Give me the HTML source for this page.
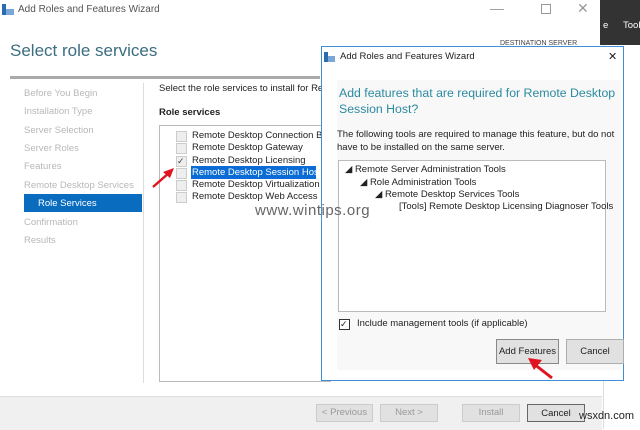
<!DOCTYPE html><html><head><style>
body{margin:0;width:640px;height:429px;overflow:hidden;background:#fff;font-family:"Liberation Sans",sans-serif;font-size:9.5px;color:#222;position:relative}
.a{position:absolute;white-space:nowrap}
.nav{color:#b8b8b8;left:24px;font-size:9.5px}
.cb{position:absolute;width:9px;height:9px;border:1px solid #ccc;background:#eee}
.btn{position:absolute;border:1px solid #adadad;background:#e1e1e1;text-align:center;font-size:9.5px;box-sizing:border-box}
</style></head><body>
<svg class="a" style="left:2px;top:4px" width="13" height="12"><rect x="0" y="0" width="4" height="11" fill="#2b6cb0"/><rect x="4" y="5" width="8" height="6" fill="#7aa7d6"/></svg>
<div class="a" style="left:18px;top:4px;color:#555;font-size:10px">Add Roles and Features Wizard</div>
<div class="a" style="left:490px;top:0;color:#999;font-size:14px">—</div>
<div class="a" style="left:541px;top:4px;width:8px;height:8px;border:1px solid #999"></div>
<div class="a" style="left:577px;top:0;color:#999;font-size:14px">✕</div>
<div class="a" style="left:600px;top:0;width:40px;height:45px;background:#333"></div>
<div class="a" style="left:603px;top:20px;color:#fff;font-size:9.5px">e</div>
<div class="a" style="left:623px;top:20px;color:#fff;font-size:9.5px">Tool</div>
<div class="a" style="left:10px;top:41px;font-size:17px;color:#3b6e80">Select role services</div>
<div class="a" style="left:500px;top:40px;font-size:7px;color:#444">DESTINATION SERVER</div>
<div class="a" style="left:10px;top:76px;width:310px;height:3px;background:#aaa"></div>
<div class="a nav" style="top:88px">Before You Begin</div>
<div class="a nav" style="top:106px">Installation Type</div>
<div class="a nav" style="top:125px">Server Selection</div>
<div class="a nav" style="top:143px">Server Roles</div>
<div class="a nav" style="top:161px">Features</div>
<div class="a nav" style="top:180px">Remote Desktop Services</div>
<div class="a" style="left:24px;top:194px;width:118px;height:18px;background:#0a6cbf"></div>
<div class="a" style="left:38px;top:198px;color:#fff">Role Services</div>
<div class="a nav" style="top:217px">Confirmation</div>
<div class="a nav" style="top:235px">Results</div>
<div class="a" style="left:143px;top:83px;width:1px;height:300px;background:#ddd"></div>
<div class="a" style="left:159px;top:83px">Select the role services to install for Rem</div>
<div class="a" style="left:159px;top:107px;font-weight:bold">Role services</div>
<div class="a" style="left:159px;top:125px;width:170px;height:255px;border:1px solid #bbb"></div>
<div class="cb" style="left:176px;top:131px"></div><div class="a" style="left:192px;top:130px">Remote Desktop Connection Br</div>
<div class="cb" style="left:176px;top:143px"></div><div class="a" style="left:192px;top:142px">Remote Desktop Gateway</div>
<div class="cb" style="left:176px;top:156px;font-size:9px;line-height:9px;color:#444">✓</div><div class="a" style="left:192px;top:155px">Remote Desktop Licensing</div>
<div class="cb" style="left:176px;top:168px"></div><div class="a" style="left:191px;top:166px;background:#0a6cd4;color:#fff;padding:1px 1px;width:123px">Remote Desktop Session Host</div>
<div class="cb" style="left:176px;top:180px"></div><div class="a" style="left:192px;top:179px">Remote Desktop Virtualization I</div>
<div class="cb" style="left:176px;top:192px"></div><div class="a" style="left:192px;top:191px">Remote Desktop Web Access</div>
<svg class="a" style="left:150px;top:166px" width="26" height="24"><line x1="3" y1="21" x2="20" y2="6" stroke="#e0141e" stroke-width="2.5"/><polygon points="24,2 13,6 20,12" fill="#e0141e"/></svg>
<div class="a" style="left:0;top:396px;width:602px;height:33px;background:#f0f0f0;border-top:1px solid #ddd"></div>
<div class="btn" style="left:316px;top:404px;width:57px;height:18px;line-height:16px;color:#999;border-color:#ccc">&lt; Previous</div>
<div class="btn" style="left:380px;top:404px;width:58px;height:18px;line-height:16px;color:#999;border-color:#ccc">Next &gt;</div>
<div class="btn" style="left:462px;top:404px;width:58px;height:18px;line-height:16px;color:#999;border-color:#ccc">Install</div>
<div class="btn" style="left:527px;top:404px;width:58px;height:18px;line-height:18px;border-color:#666">Cancel</div>
<div class="a" style="left:603px;top:45px;width:1px;height:384px;background:#ddd"></div>
<div class="a" style="left:579px;top:410px;font-size:11px;color:#222;text-shadow:0 0 2px #fff">wsxdn.com</div>
<div class="a" style="left:321px;top:46px;width:303px;height:335px;border:1px solid #3f8fd8;background:#fff;box-sizing:border-box"></div>
<div class="a" style="left:337px;top:80px;width:284px;height:290px;background:#f8f8f8"></div>
<svg class="a" style="left:324px;top:52px" width="12" height="11"><rect x="0" y="0" width="4" height="10" fill="#2b6cb0"/><rect x="4" y="4" width="7" height="6" fill="#7aa7d6"/></svg>
<div class="a" style="left:340px;top:51px;font-size:9.5px">Add Roles and Features Wizard</div>
<div class="a" style="left:608px;top:50px;font-size:11px">✕</div>
<div class="a" style="left:339px;top:85px;font-size:12.3px;color:#2b8aa0;line-height:16px">Add features that are required for Remote Desktop<br>Session Host?</div>
<div class="a" style="left:337px;top:128px;font-size:9.5px;line-height:13px">The following tools are required to manage this feature, but do not<br>have to be installed on the same server.</div>
<div class="a" style="left:338px;top:160px;width:268px;height:152px;border:1px solid #bbb;background:#fff;box-sizing:border-box"></div>
<div class="a" style="left:345px;top:164px">◢ Remote Server Administration Tools</div>
<div class="a" style="left:360px;top:177px">◢ Role Administration Tools</div>
<div class="a" style="left:375px;top:189px">◢ Remote Desktop Services Tools</div>
<div class="a" style="left:399px;top:201px">[Tools] Remote Desktop Licensing Diagnoser Tools</div>
<div class="a" style="left:255px;top:202px;font-size:15px;color:#666;letter-spacing:0.5px">www.wintips.org</div>
<div class="cb" style="left:339px;top:319px;border-color:#333;background:#fff;font-size:9px;line-height:9px">✓</div>
<div class="a" style="left:357px;top:318px">Include management tools (if applicable)</div>
<div class="btn" style="left:496px;top:339px;width:63px;height:25px;line-height:23px;border-color:#888">Add Features</div>
<div class="btn" style="left:566px;top:339px;width:58px;height:25px;line-height:23px">Cancel</div>
<svg class="a" style="left:524px;top:356px" width="34" height="26"><line x1="28" y1="22" x2="10" y2="8" stroke="#e0141e" stroke-width="3"/><polygon points="4,2 18,4 10,14" fill="#e0141e"/></svg>
</body></html>
